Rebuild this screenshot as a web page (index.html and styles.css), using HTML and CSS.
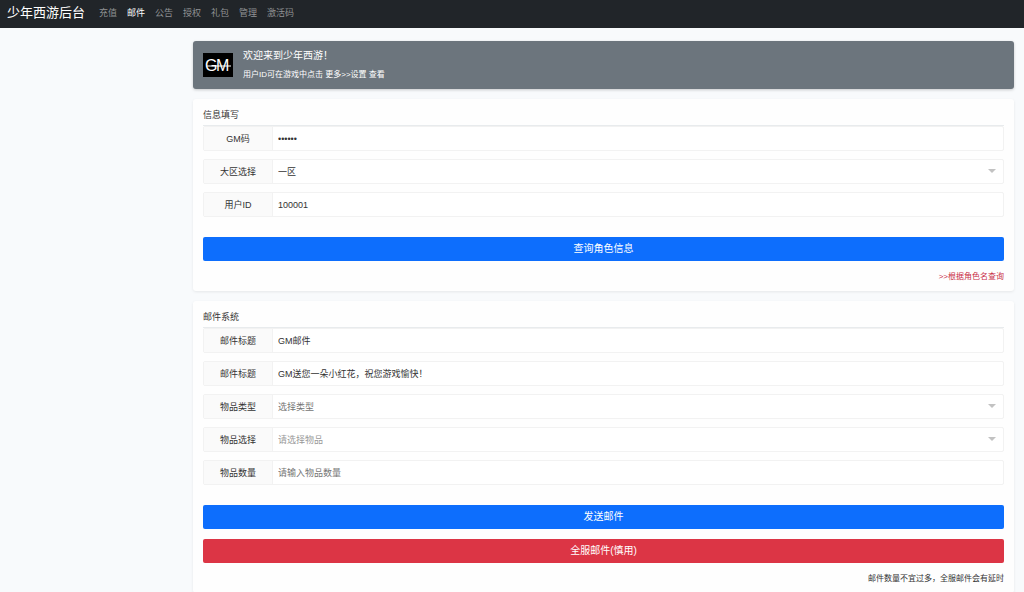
FILE: index.html
```html
<!DOCTYPE html>
<html lang="zh-CN">
<head>
<meta charset="utf-8">
<meta name="viewport" content="width=device-width, initial-scale=1">
<title>少年西游后台</title>
<link rel="stylesheet" href="styles.css">
</head>
<body>
<header class="navbar">
  <a class="brand" href="#">少年西游后台</a>
  <nav class="nav">
    <a class="nav-link" href="#">充值</a>
    <a class="nav-link active" href="#" aria-current="page">邮件</a>
    <a class="nav-link" href="#">公告</a>
    <a class="nav-link" href="#">授权</a>
    <a class="nav-link" href="#">礼包</a>
    <a class="nav-link" href="#">管理</a>
    <a class="nav-link" href="#">激活码</a>
  </nav>
</header>
<main class="page">
  <section class="banner">
    <svg class="logo" viewBox="0 0 30 24" role="img" aria-label="GM">
      <rect width="30" height="24" fill="#000"/>
      <text class="logo-text" x="2" y="18">G</text>
      <text class="logo-text" x="13" y="18">M</text>
      <path d="M4 13H28" stroke="#fff" stroke-width="1"/>
    </svg>
    <div>
      <h1 class="banner-title">欢迎来到少年西游！</h1>
      <p class="banner-note">用户ID可在游戏中点击 更多&gt;&gt;设置 查看</p>
    </div>
  </section>

  <form class="card">
    <h2 class="card-title">信息填写</h2>
    <div class="fields">
      <div class="field">
        <label class="label" for="gm">GM码</label>
        <input class="control" id="gm" type="password" value="123456" autocomplete="off">
      </div>
      <div class="field">
        <label class="label" for="zone">大区选择</label>
        <span class="select-wrap"><select class="control" id="zone"><option>一区</option></select></span>
      </div>
      <div class="field">
        <label class="label" for="uid">用户ID</label>
        <input class="control" id="uid" type="text" value="100001">
      </div>
    </div>
    <button class="btn primary" type="button">查询角色信息</button>
    <p class="foot"><a class="danger-link" href="#">&gt;&gt;根据角色名查询</a></p>
  </form>

  <form class="card">
    <h2 class="card-title">邮件系统</h2>
    <div class="fields">
      <div class="field">
        <label class="label" for="title">邮件标题</label>
        <input class="control" id="title" type="text" value="GM邮件">
      </div>
      <div class="field">
        <label class="label" for="body">邮件标题</label>
        <input class="control" id="body" type="text" value="GM送您一朵小红花，祝您游戏愉快！">
      </div>
      <div class="field">
        <label class="label" for="type">物品类型</label>
        <span class="select-wrap"><select class="control unset" id="type"><option>选择类型</option></select></span>
      </div>
      <div class="field">
        <label class="label" for="item">物品选择</label>
        <span class="select-wrap"><select class="control unset faint" id="item"><option>请选择物品</option></select></span>
      </div>
      <div class="field">
        <label class="label" for="count">物品数量</label>
        <input class="control" id="count" type="text" placeholder="请输入物品数量">
      </div>
    </div>
    <button class="btn primary" type="button">发送邮件</button>
    <button class="btn danger" type="button">全服邮件(慎用)</button>
    <p class="foot">邮件数量不宜过多，全服邮件会有延时</p>
  </form>
</main>
</body>
</html>
```
FILE: styles.css
```css
* { box-sizing: border-box; }
body {
  margin: 0;
  background: #f8fafc;
  color: #333;
  font: 9px/14px "Liberation Sans", "Noto Sans CJK SC", sans-serif;
}
h1, h2, p { margin: 0; font-weight: 400; }
a { text-decoration: none; }

.navbar {
  display: flex;
  align-items: center;
  gap: 14px;
  min-height: 28px;
  padding: 0 7px 2px;
  background: #212529;
}
.brand { color: #fff; font-size: 13px; line-height: 20px; }
.nav { display: flex; gap: 10px; }
.nav-link { color: #909294; }
.nav-link.active { color: #fff; }

.page {
  display: flex;
  flex-direction: column;
  gap: 10px;
  padding: 13px 10px 0 193px;
}
.banner {
  display: flex;
  align-items: center;
  gap: 10px;
  min-height: 48px;
  padding: 6px 10px;
  border-radius: 3px;
  background: #6c757d;
  color: #fff;
  box-shadow: 0 1px 3px #0003;
}
.logo { width: 30px; height: 24px; }
.logo-text { fill: #fff; font: 16px "Liberation Sans", sans-serif; }
.banner-title { font-size: 10px; line-height: 18px; }
.banner-note { font-size: 8px; line-height: 16px; padding-top: 2px; }

.card {
  padding: 8px 10px;
  border-radius: 3px;
  background: #fefefe;
  box-shadow: 0 1px 3px #00000014;
}
.card-title {
  padding-bottom: 2px;
  font-size: 9px;
  line-height: 16px;
  border-bottom: 1px solid #e8ebed;
}
.fields { display: grid; gap: 8px; margin-bottom: 20px; }
.field {
  display: grid;
  grid-template-columns: 69px 1fr;
  height: 25px;
  border: 1px solid #f2f2f2;
  border-radius: 2px;
  background: #fff;
}
.label {
  display: flex;
  align-items: center;
  justify-content: center;
  border-right: 1px solid #f2f2f2;
  background: #fafafa;
}
.control {
  width: 100%;
  height: 100%;
  padding: 0 5px;
  border: 0;
  outline: 0;
  background: transparent;
  color: #333;
  font: inherit;
  appearance: none;
}
.control::placeholder { color: #757575; opacity: 1; }
.unset { color: #757575; }
.faint { color: #999; }
.select-wrap { position: relative; display: block; }
.select-wrap::after {
  content: "";
  position: absolute;
  top: 9px;
  right: 7px;
  border: 4px solid transparent;
  border-top-color: #c2c2c2;
  border-bottom: 0;
  pointer-events: none;
}

.btn {
  display: block;
  width: 100%;
  height: 24px;
  padding: 0;
  border: 0;
  border-radius: 2px;
  color: #fff;
  font: inherit;
  font-size: 10px;
}
.btn + .btn { margin-top: 10px; }
.primary { background: #0d6efd; }
.danger { background: #dc3545; }
.foot {
  padding-top: 9px;
  margin-bottom: -1px;
  font-size: 8px;
  text-align: right;
}
.danger-link { color: #c92f48; }
```
